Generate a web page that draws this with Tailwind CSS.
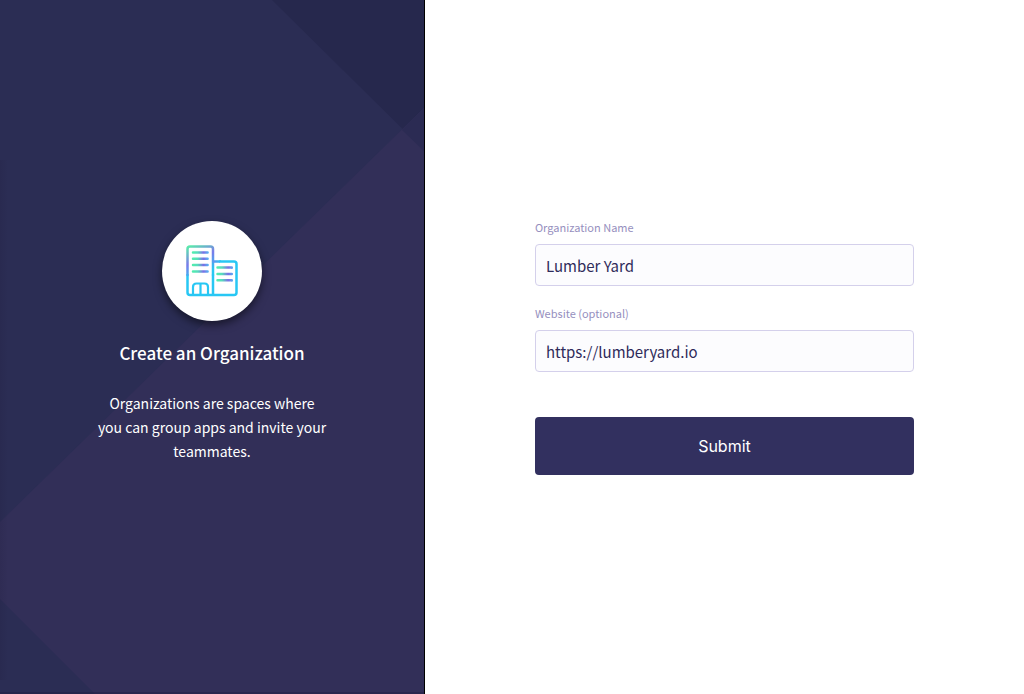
<!DOCTYPE html>
<html lang="en">
<head>
<meta charset="utf-8">
<meta name="viewport" content="width=device-width, initial-scale=1">
<title>Create an Organization</title>
<script src="https://cdn.jsdelivr.net/npm/@tailwindcss/browser@4"></script>
</head>
<body class="flex min-h-screen bg-white font-['Noto_Sans_CJK_SC',sans-serif]">
  <aside class="relative flex w-[41.5%] shrink-0 flex-col items-center justify-center overflow-hidden border-r border-black bg-[#2b2d54] px-20 text-center text-white">
    <svg class="absolute inset-0 h-full w-full" viewBox="0 0 424 694" preserveAspectRatio="none" aria-hidden="true">
      <defs>
        <linearGradient id="edge"><stop offset="0" stop-color="#1c1838" stop-opacity=".14"/><stop offset="1" stop-color="#1c1838" stop-opacity="0"/></linearGradient>
      </defs>
      <path d="M272 0H424V150Z" fill="#26284d"/>
      <path d="M424 108V694H95L0 599V522Z" fill="#322f58"/>
      <path d="M402 130L424 108V151Z" fill="#2b2b53"/>
      <path d="M0 160H8V680H0Z" fill="url(#edge)"/>
      <path d="M0 692H424V694H0Z" fill="#1c1838" fill-opacity=".3"/>
    </svg>
    <div class="relative flex size-[100px] items-center justify-center rounded-full bg-white shadow-[0_4px_8px_rgba(0,0,0,0.5)]">
      <svg class="size-[52px]" viewBox="0 0 52 52" fill="none" stroke-width="2.5" stroke-linecap="round" stroke-linejoin="round" aria-hidden="true">
        <defs>
          <linearGradient id="tower" gradientUnits="userSpaceOnUse" x1="4" y1="1" x2="18" y2="29"><stop offset="0" stop-color="#5be8ac"/><stop offset=".5" stop-color="#7a7bea"/><stop offset="1" stop-color="#28c7f4"/></linearGradient>
          <linearGradient id="wing" gradientUnits="userSpaceOnUse" x1="26" y1="0" x2="35" y2="0"><stop offset="0" stop-color="#6b8bef"/><stop offset="1" stop-color="#28c7f4"/></linearGradient>
          <linearGradient id="rowA" gradientUnits="userSpaceOnUse" x1="6" y1="0" x2="22" y2="0"><stop offset="0" stop-color="#4ff0ac"/><stop offset=".35" stop-color="#58dcbc"/><stop offset=".72" stop-color="#7b6fe6"/><stop offset="1" stop-color="#58aff2"/></linearGradient>
          <linearGradient id="rowB" gradientUnits="userSpaceOnUse" x1="30" y1="0" x2="47" y2="0"><stop offset="0" stop-color="#4ff0ac"/><stop offset=".35" stop-color="#58dcbc"/><stop offset=".72" stop-color="#7b6fe6"/><stop offset="1" stop-color="#58aff2"/></linearGradient>
        </defs>
        <path d="M27 30V50M1.500 30V47.500Q1.500 50 4 50H48Q50.500 50 50.500 47.500V19Q50.500 16.500 48 16.500H34" stroke="#28c7f4"/>
        <path d="M27 30V4Q27 1.500 24.500 1.500H4Q1.500 1.500 1.500 4V30" stroke="url(#tower)"/>
        <path d="M27 16.500H34V16.600" stroke="url(#wing)" stroke-linecap="butt"/>
        <path d="M7 50V42Q7 38.500 10.500 38.500H18.500Q22 38.500 22 42V50M14.500 38.500V50" stroke="#28c7f4" stroke-width="2.200"/>
        <path d="M7 7.400H21.600V7.500M7 13.700H21.600V13.800M7 20H21.600V20.100M7 26.400H21.600V26.500" stroke="url(#rowA)"/>
        <path d="M31.500 22.600H45.800V22.700M31.500 29H45.800V29.100M31.500 35.300H45.800V35.400" stroke="url(#rowB)"/>
      </svg>
    </div>
    <h1 class="relative mt-[18px] text-[17px] leading-7 font-medium">Create an Organization</h1>
    <p class="relative mt-6 mb-2.5 max-w-58 text-[14px] leading-6">Organizations are spaces where you can group apps and invite your teammates.</p>
  </aside>
  <main class="flex flex-1 flex-col justify-center px-[110px]">
    <form class="flex flex-col">
      <label for="org" class="text-[11px] leading-[14px] text-[#968fbe]">Organization Name</label>
      <input id="org" type="text" value="Lumber Yard" class="mt-2.5 h-[42px] w-full rounded-[4px] border border-[#d4d0eb] bg-[#fcfcfe] px-2.5 pt-0.5 text-[15px] text-[#2f2b5a] outline-none">
      <label for="site" class="mt-5 text-[11px] leading-[14px] text-[#968fbe]">Website (optional)</label>
      <input id="site" type="text" value="https://lumberyard.io" class="mt-2.5 h-[42px] w-full rounded-[4px] border border-[#d4d0eb] bg-[#fcfcfe] px-2.5 pt-0.5 text-[15px] text-[#2f2b5a] outline-none">
      <button type="button" class="mt-[45px] h-[58px] w-full rounded-[4px] bg-[#32305f] font-[Inter,sans-serif] text-[16px] text-white">Submit</button>
    </form>
  </main>
</body>
</html>
